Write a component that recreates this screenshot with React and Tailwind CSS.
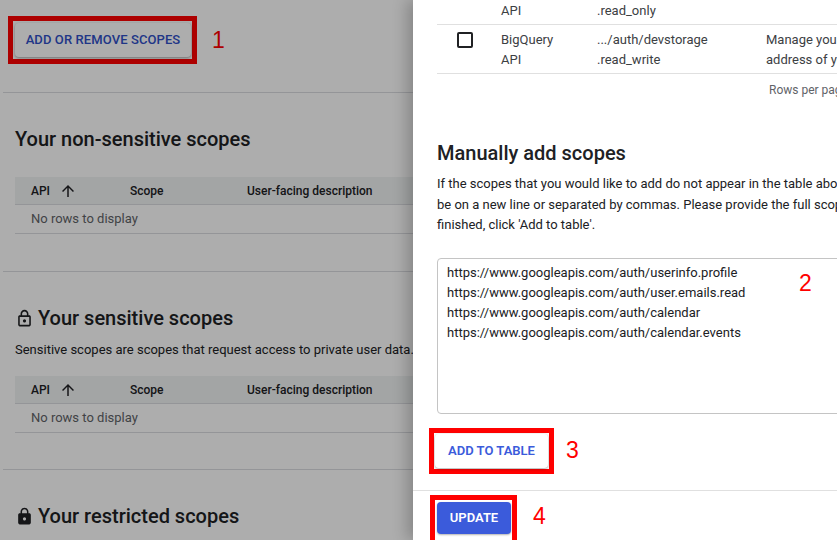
import React from 'react';

const LockOutline = () => (
  <svg viewBox="0 0 24 24" className="w-[19px] h-[19px] fill-current text-[#202124]">
    <path d="M18 8h-1V6c0-2.76-2.24-5-5-5S7 3.24 7 6v2H6c-1.1 0-2 .9-2 2v10c0 1.1.9 2 2 2h12c1.1 0 2-.9 2-2V10c0-1.1-.9-2-2-2zM9 6c0-1.66 1.34-3 3-3s3 1.34 3 3v2H9V6zm9 14H6V10h12v10zm-6-3c1.1 0 2-.9 2-2s-.9-2-2-2-2 .9-2 2 .9 2 2 2z" />
  </svg>
);

const LockFilled = () => (
  <svg viewBox="0 0 24 24" className="w-[19px] h-[19px] fill-current text-[#202124]">
    <path d="M18 8h-1V6c0-2.76-2.24-5-5-5S7 3.24 7 6v2H6c-1.1 0-2 .9-2 2v10c0 1.1.9 2 2 2h12c1.1 0 2-.9 2-2V10c0-1.1-.9-2-2-2zm-6 9c-1.1 0-2-.9-2-2s.9-2 2-2 2 .9 2 2-.9 2-2 2zm3.1-9H8.9V6c0-1.71 1.39-3.1 3.1-3.1 1.71 0 3.1 1.39 3.1 3.1v2z" />
  </svg>
);

const ArrowUp = () => (
  <svg viewBox="0 0 24 24" className="w-[18px] h-[18px] fill-current text-[#202124]">
    <path d="M4 12l1.41 1.41L11 7.83V20h2V7.83l5.58 5.59L20 12l-8-8-8 8z" />
  </svg>
);

// red annotation number
const Mark = ({ n, className = '' }) => (
  <span className={`text-[23px] leading-none text-[#ff0000] ${className}`} style={{ fontFamily: '"Liberation Sans", Arial, sans-serif' }}>
    {n}
  </span>
);

const EmptyTable = () => (
  <div className="ml-[15px]">
    <div className="flex items-center h-[28px] bg-[#f1f3f4] border-b border-[#dadce0] text-[12px] font-medium text-[#202124]">
      <div className="w-[115px] shrink-0 pl-[16px] flex items-center">
        <span>API</span>
        <span className="ml-[9px]"><ArrowUp /></span>
      </div>
      <div className="w-[117px] shrink-0">Scope</div>
      <div className="whitespace-nowrap">User-facing description</div>
    </div>
    <div className="h-[29px] flex items-center pl-[16px] border-b border-[#dadce0] text-[13px] text-[#5f6368]">
      No rows to display
    </div>
  </div>
);

const LeftPage = () => (
  <div className="relative w-[413px] shrink-0 h-full overflow-hidden bg-white">
    <div className="pl-[8px] pt-[16px] flex items-center">
      <div className="border-[5px] border-[#ff0000] p-[2px] pr-[1px]">
        <button className="w-[176px] h-[34px] rounded-[4px] bg-white shadow-[0_1px_3px_rgba(0,0,0,0.35)] text-[13px] font-medium text-[#3050c8] tracking-[0.1px]">
          ADD OR REMOVE SCOPES
        </button>
      </div>
      <Mark n="1" className="ml-[15px]" />
    </div>

    <div className="mt-[28px] ml-[3px] border-t border-[#dadce0]" />

    <h2 className="mt-[32px] ml-[15px] text-[20px] leading-[28px] font-medium text-[#202124]">Your non-sensitive scopes</h2>
    <div className="mt-[24px]">
      <EmptyTable />
    </div>

    <div className="mt-[37px] ml-[3px] border-t border-[#dadce0]" />

    <h2 className="mt-[32px] ml-[15px] flex items-center gap-[4px] text-[20px] leading-[28px] font-medium text-[#202124]">
      <LockOutline />
      <span>Your sensitive scopes</span>
    </h2>
    <p className="mt-[8px] ml-[15px] text-[13px] leading-[20px] text-[#202124] whitespace-nowrap">
      Sensitive scopes are scopes that request access to private user data.
    </p>
    <div className="mt-[16px]">
      <EmptyTable />
    </div>

    <div className="mt-[36px] ml-[3px] border-t border-[#dadce0]" />

    <h2 className="mt-[32px] ml-[15px] flex items-center gap-[4px] text-[20px] leading-[28px] font-medium text-[#202124]">
      <LockFilled />
      <span>Your restricted scopes</span>
    </h2>

    {/* scrim behind the drawer */}
    <div className="absolute inset-0 bg-black/[0.32]" />
  </div>
);

const ScopeRow = ({ api, scope, desc, top }) => (
  <div className={`flex items-start h-[49px] pt-[5px] border-b border-[#e0e0e0] text-[13px] leading-[20px] text-[#3c4043] ${top ? '-mt-[24px]' : ''}`}>
    <div className="w-[64px] shrink-0 pl-[20px] pt-[2px]">
      <div className="w-[16px] h-[16px] rounded-[2px] border-2 border-[#202124]" />
    </div>
    <div className="w-[96px] shrink-0 whitespace-nowrap">
      <div>{api[0]}</div>
      <div>{api[1]}</div>
    </div>
    <div className="w-[169px] shrink-0 whitespace-nowrap">
      <div>{scope[0]}</div>
      <div>{scope[1]}</div>
    </div>
    <div className="whitespace-nowrap">
      <div>{desc[0]}</div>
      <div>{desc[1]}</div>
    </div>
  </div>
);

const Drawer = () => (
  <div className="relative z-10 flex-1 h-full bg-white overflow-hidden shadow-[-6px_0_14px_rgba(0,0,0,0.22)] flex flex-col">
    <div className="flex-1 overflow-hidden">
      <div className="pl-[24px] w-[900px]">
        <ScopeRow top api={['BigQuery', 'API']} scope={['.../auth/devstorage', '.read_only']} desc={['', '']} />
        <ScopeRow api={['BigQuery', 'API']} scope={['.../auth/devstorage', '.read_write']} desc={['Manage your data and permissions in Cloud Storage and see the email', 'address of your Google Account']} />
        <div className="h-[32px] flex items-center pl-[332px] text-[12px] text-[#5f6368] whitespace-nowrap">
          Rows per page: 10
        </div>
      </div>

      <div className="pl-[24px]">
        <h2 className="mt-[33px] text-[20px] leading-[28px] font-medium text-[#202124]">Manually add scopes</h2>
        <p className="mt-[7px] text-[13px] leading-[20.5px] text-[#202124] whitespace-nowrap">
          If the scopes that you would like to add do not appear in the table above, you can enter them here. Each scope should
          <br />
          be on a new line or separated by commas. Please provide the full scope string (beginning with "https://"). When you are
          <br />
          finished, click 'Add to table'.
        </p>

        <div className="relative mt-[22px] w-[460px] h-[156px] rounded-[4px] border border-[#c4c4c4] pl-[9px] pt-[4px] text-[13px] leading-[20.3px] text-[#202124] whitespace-nowrap">
          <div>https://www.googleapis.com/auth/userinfo.profile</div>
          <div>https://www.googleapis.com/auth/user.emails.read</div>
          <div>https://www.googleapis.com/auth/calendar</div>
          <div>https://www.googleapis.com/auth/calendar.events</div>
          <Mark n="2" className="absolute left-[361px] top-[13px]" />
        </div>

        <div className="mt-[14px] -ml-[8px] flex items-center">
          <div className="border-[5px] border-[#ff0000] p-[1px]">
            <button className="w-[113px] h-[34px] rounded-[4px] bg-white shadow-[0_1px_3px_rgba(0,0,0,0.35)] text-[13px] font-semibold text-[#3b5bdb]">
              ADD TO TABLE
            </button>
          </div>
          <Mark n="3" className="ml-[12px]" />
        </div>
      </div>
    </div>

    <div className="h-[50px] shrink-0 border-t border-[#e0e0e0] pl-[17px] pt-[4px]">
      <div className="flex items-center">
        <div className="border-[5px] border-b-0 border-[#ff0000] p-[2px] pr-[1px] pb-[6px]">
          <button className="w-[74px] h-[32px] rounded-[4px] bg-[#3b5bdb] shadow-[0_1px_2px_rgba(0,0,0,0.3)] text-[13px] font-semibold text-white">
            UPDATE
          </button>
        </div>
        <Mark n="4" className="ml-[16px] -mt-[2px]" />
      </div>
    </div>
  </div>
);

export default function App() {
  return (
    <div className="w-[837px] h-[540px] flex overflow-hidden bg-white" style={{ fontFamily: 'Roboto, "Noto Sans", sans-serif' }}>
      <LeftPage />
      <Drawer />
    </div>
  );
}
